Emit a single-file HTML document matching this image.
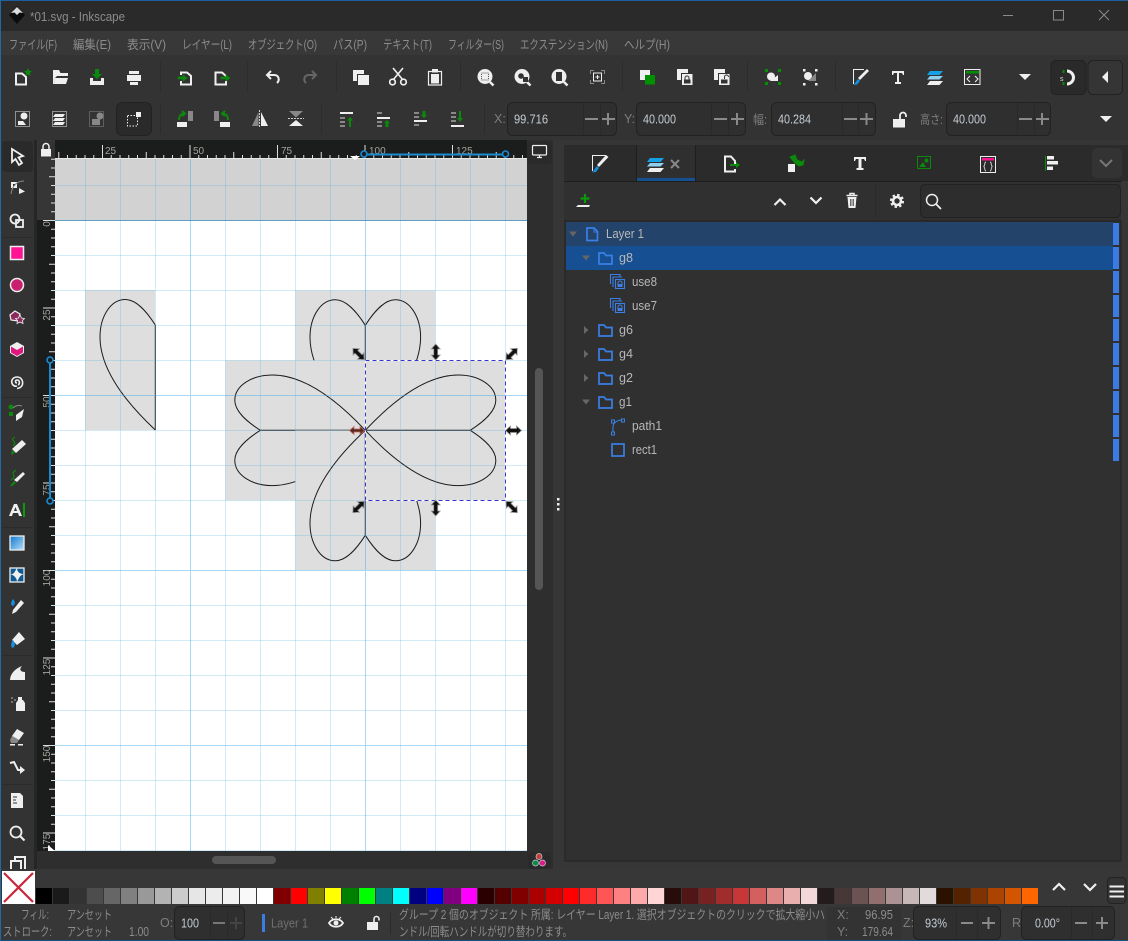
<!DOCTYPE html>
<html lang="ja"><head><meta charset="utf-8"><title>*01.svg - Inkscape</title>
<style>
html,body{margin:0;padding:0;background:#333;width:1128px;height:941px;overflow:hidden}
svg{display:block}
text{font-family:"Liberation Sans","Noto Sans CJK JP",sans-serif;font-size:12px}
.m{fill:#8c8c8c;font-size:12.500px}
.l{fill:#7e7e7e;font-size:12.500px}
.v{fill:#c4ccd4;font-size:12.500px}
.t{fill:#b8b8b8;font-size:13px}
.r{fill:#a3a39a;font-size:10px}
.s{fill:#8c8c8c;font-size:12.500px}
</style></head><body>
<svg xmlns="http://www.w3.org/2000/svg" width="1128" height="941" viewBox="0 0 1128 941">
<defs>
<linearGradient id="gr" x1="0" y1="0" x2="1" y2="1"><stop offset="0" stop-color="#0f78d0"/><stop offset="1" stop-color="#b8e0f8"/></linearGradient>
<path id="lobe" d="M0,-105C-9,-119 -19,-130.5 -30,-130.5C-45,-130.5 -55.3,-113 -55.3,-93C-55.3,-62 -32,-30 0,0" fill="none" stroke="#1c1c1c" stroke-width="1"/>
<pattern id="tx" patternUnits="userSpaceOnUse" x="14.5" y="140" width="87.5" height="19"><path d="M.5,5V19M9.25,15V19M18,15V19M26.75,15V19M35.5,15V19M44.25,12V19M53,15V19M61.75,15V19M70.5,15V19M79.25,15V19" stroke="#ddd" stroke-width="1" fill="none"/></pattern>
<pattern id="ty" patternUnits="userSpaceOnUse" x="37" y="220" width="18" height="87.5"><path d="M6,.5H18M14,9.25H18M14,18H18M14,26.75H18M14,35.5H18M12,44.25H18M14,53H18M14,61.75H18M14,70.5H18M14,79.25H18" stroke="#ddd" stroke-width="1" fill="none"/></pattern>
<path id="dbl" d="M-8,0L-3,-4.500V-2H3V-4.500L8,0L3,4.500V2H-3V4.500Z" fill="#111" stroke="#999" stroke-width=".8"/>
<path id="fold" d="M1,1H6L8,3.500H14V12H1Z" fill="none" stroke="#3a7fe6" stroke-width="1.700"/>
<path id="car" d="M-4,-2.500H4L0,2.500Z" fill="#666"/>
<path id="carr" d="M-2,-4V4L2.500,0Z" fill="#666"/>
<g id="usei" fill="none" stroke="#3a7fe6" stroke-width="1.100"><path d="M0.500,10V0.500H10V3"/><path d="M3,13V3H12"/><rect x="5.500" y="5.500" width="9" height="9" fill="#303030"/><path d="M8,10.500V9a2,2 0 0 1 4,0V10.500"/><rect x="7.500" y="10" width="5" height="3" fill="#3a7fe6" stroke="none"/></g>
</defs>

<!-- window chrome backgrounds -->
<rect width="1128" height="941" fill="#353535"/>
<rect y="1" width="1128" height="30" fill="#2a2a2a"/>
<rect y="31" width="1128" height="24" fill="#383838"/>
<rect y="55" width="1128" height="85" fill="#333"/>
<rect width="1128" height="1" fill="#1d5f9e"/>
<rect width="1" height="941" fill="#1d6ba8"/>

<!-- title -->
<path d="M17,6L25,15L17,24L9,15Z" fill="#0c0c0c"/><path d="M17,7L23,13L19.500,12.500L17,15L14.500,12.500L11,13Z" fill="#ddd"/>
<text x="30" y="21" fill="#8c8c8c" textLength="95" lengthAdjust="spacingAndGlyphs" style="font-size:13px">*01.svg - Inkscape</text>
<path d="M1003,15.500H1013" stroke="#8a8a8a"/><rect x="1053.500" y="10.500" width="10" height="9.500" fill="none" stroke="#8a8a8a"/><path d="M1099,10L1109,20M1109,10L1099,20" stroke="#8a8a8a" fill="none"/>

<!-- menu -->
<text class="m" x="9" y="49" textLength="48" lengthAdjust="spacingAndGlyphs">ファイル(F)</text>
<text class="m" x="73" y="49" textLength="38" lengthAdjust="spacingAndGlyphs">編集(E)</text>
<text class="m" x="127" y="49" textLength="39" lengthAdjust="spacingAndGlyphs">表示(V)</text>
<text class="m" x="182" y="49" textLength="50" lengthAdjust="spacingAndGlyphs">レイヤー(L)</text>
<text class="m" x="248" y="49" textLength="69" lengthAdjust="spacingAndGlyphs">オブジェクト(O)</text>
<text class="m" x="333" y="49" textLength="34" lengthAdjust="spacingAndGlyphs">パス(P)</text>
<text class="m" x="383" y="49" textLength="49" lengthAdjust="spacingAndGlyphs">テキスト(T)</text>
<text class="m" x="448" y="49" textLength="56" lengthAdjust="spacingAndGlyphs">フィルター(S)</text>
<text class="m" x="520" y="49" textLength="88" lengthAdjust="spacingAndGlyphs">エクステンション(N)</text>
<text class="m" x="624" y="49" textLength="46" lengthAdjust="spacingAndGlyphs">ヘルプ(H)</text>

<!-- toolbar separators -->
<path d="M160.500,62V92M247.500,62V92M336.500,62V92M460.500,62V92M622.500,62V92M747.500,62V92M835.500,62V92M160.500,104V134M321.500,104V134M484.500,104V134" stroke="#2c2c2c"/>

<!-- row 1 icons -->
<g fill="#efefef">
<path d="M16,73.500H22L26,77V84.500H16Z" fill="none" stroke="#efefef" stroke-width="2"/>
<path d="M28,68L29.200,70.800L32,71L29.900,73L30.500,76L28,74.400L25.500,76L26.100,73L24,71L26.800,70.800Z" fill="#0a8a0a"/>
<path d="M53,70H59L60.500,73H68V76H57L55,78L54,84H53Z"/><path d="M55,78H68L66,84H54Z"/>
<path d="M95,69H99V74H102L97,79L92,74H95Z" fill="#0a8a0a"/><path d="M90,78H93V81H101V78H104V85H90Z"/>
<path d="M129,71H139V74H129ZM127,75H141V81H127ZM130,82H138V85H130Z"/>
<path d="M181,75V72.500H187L191,76V84.500H181V81" fill="none" stroke="#efefef" stroke-width="2"/>
<path d="M178,77H183V75L187,78L183,81V79H178Z" fill="#0a8a0a" stroke="#0a8a0a" stroke-width=".6"/>
<path d="M226,76L222,72.500H215.500V84.500H226V81" fill="none" stroke="#efefef" stroke-width="2"/>
<path d="M221,77H226V75L230,78L226,81V79H221Z" fill="#0a8a0a" stroke="#0a8a0a" stroke-width=".6"/>
<path d="M277,83C280,80 279,75 274,75H268M271,71L267,75L271,79" fill="none" stroke="#efefef" stroke-width="2"/>
<path d="M306,83C303,80 304,75 309,75H315M312,71L316,75L312,79" fill="none" stroke="#666" stroke-width="2"/>
<path d="M353,70H364V74H357V81H353Z"/><rect x="358" y="75" width="11" height="10"/>
<path d="M393,80L403,68M403,80L393,68" stroke="#efefef" stroke-width="1.600" fill="none"/><circle cx="392.500" cy="82" r="2.800" fill="none" stroke="#efefef" stroke-width="1.700"/><circle cx="403.500" cy="82" r="2.800" fill="none" stroke="#efefef" stroke-width="1.700"/>
<rect x="428.500" y="71.500" width="13" height="13.500" fill="none" stroke="#efefef" stroke-width="1.200"/><rect x="431" y="74" width="8" height="9.500"/><rect x="432" y="69" width="6" height="3.500"/>
<circle cx="485" cy="76.500" r="7.500"/><path d="M490,82L493.500,85.500" stroke="#efefef" stroke-width="2.500"/><rect x="481.500" y="73" width="7" height="7" fill="none" stroke="#555" stroke-dasharray="1 1"/>
<circle cx="522" cy="76.500" r="7.500"/><path d="M527,82L530.500,85.500" stroke="#efefef" stroke-width="2.500"/><circle cx="521" cy="76" r="2.800" fill="#333"/><rect x="523" y="77" width="5" height="5" fill="#333"/>
<circle cx="559" cy="76.500" r="7.500"/><path d="M564,82L567.500,85.500" stroke="#efefef" stroke-width="2.500"/><rect x="556" y="72" width="6" height="9" fill="#333"/>
<path d="M590.500,74V70.500H594M601,70.500H604.500V74M604.500,80V83.500H601M594,83.500H590.500V80" fill="none" stroke="#888"/><rect x="593.500" y="73" width="8" height="8" fill="none" stroke="#efefef"/><path d="M595.500,77H599.500M597.500,75V79" stroke="#efefef"/>
<rect x="640" y="70" width="10" height="10"/><rect x="645" y="75" width="10" height="9.500" fill="#009000"/>
<path d="M677,69H688V73H681V80H677Z"/><rect x="682" y="74" width="10.500" height="11"/><path d="M685,80V78a2,2 0 0 1 4,0V80" fill="none" stroke="#333"/><rect x="684" y="79.500" width="6.500" height="4" fill="#333"/>
<path d="M714,69H725V73H718V80H714Z"/><rect x="719" y="74" width="10.500" height="11"/><path d="M724.500,79V77a2,2 0 0 1 4,0" fill="none" stroke="#333"/><rect x="721" y="79.500" width="6.500" height="4" fill="#333"/>
<g fill="#009000"><rect x="765" y="69" width="3" height="3"/><rect x="778" y="69" width="3" height="3"/><rect x="765" y="82" width="3" height="3"/><rect x="778" y="82" width="3" height="3"/></g>
<circle cx="771" cy="76.500" r="4"/><path d="M778,75V81H770Z"/>
<rect x="803" y="69" width="2.500" height="2.500"/><rect x="815" y="69" width="2.500" height="2.500"/><rect x="803" y="83" width="2.500" height="2.500"/><rect x="815" y="83" width="2.500" height="2.500"/>
<circle cx="808" cy="76" r="4"/><path d="M816,73V81H808Z" fill="#888"/>
<path d="M864,69.500H853.500V84" fill="none" stroke="#efefef"/><path d="M867,69L869,71L860,80L858,78Z"/><path d="M858,79L860,81L857,84.500L853,85C855,84 856,81 858,79Z" fill="#1490dd"/>
<path d="M892,71H904V75H903L902,73H899V82H901V84H895V82H897V73H894L893,75H892Z"/>
<path d="M930,71H943L939.500,75H927Z" fill="#16a0e6"/><path d="M930,76H943L939.500,79.500H927Z" fill="#8fd0f0"/><path d="M930,81H943L939.500,85H927Z"/>
<rect x="964.500" y="69.500" width="15.500" height="15" fill="none" stroke="#efefef"/><rect x="966" y="71" width="13" height="2.500" fill="#009000"/><path d="M970,76L967,79L970,82M975,76L978,79L975,82" fill="none" stroke="#efefef"/>
<path d="M1019,74H1031L1025,80Z"/>
</g>
<rect x="1051" y="60.500" width="35" height="34" rx="5" fill="#2a2a2a" stroke="#222"/>
<path d="M1067,71A6.500,6.500 0 1 1 1067,84" fill="none" stroke="#efefef" stroke-width="3"/><rect x="1062.500" y="70" width="2" height="3" fill="#009000"/><rect x="1062.500" y="82" width="2" height="3" fill="#009000"/><text x="1060" y="81" style="font-size:7px" fill="#ddd">s</text>
<rect x="1088" y="60.500" width="34.500" height="34" rx="5" fill="#353535" stroke="#222"/><path d="M1108,71V83L1102,77Z" fill="#efefef"/>

<!-- row 2 icons -->
<g fill="#efefef">
<g fill="none" stroke="#efefef" stroke-dasharray="1 1" shape-rendering="crispEdges"><rect x="15.500" y="111.500" width="14" height="15"/><rect x="52.500" y="111.500" width="14" height="15"/><rect x="89.500" y="111.500" width="14" height="15" stroke="#888"/></g>
<circle cx="24" cy="116" r="3.500"/><path d="M18,125V121H23L26,125Z"/>
<path d="M55,114H65L63,117H53ZM55,118H65L63,121H53ZM55,122H65L63,125H53Z"/>
<circle cx="100" cy="116" r="3.500" fill="#888"/><path d="M92,125V119H100V125Z" fill="#888"/>
<rect x="116.500" y="102.500" width="35" height="33" rx="6" fill="#2a2a2a" stroke="#222"/>
<rect x="127.500" y="115.500" width="10" height="10.500" fill="none" stroke="#efefef" stroke-dasharray="1.500 1.500"/><rect x="136" y="112" width="5" height="5"/>
<rect x="188" y="111" width="5" height="10" fill="#888"/><rect x="177" y="122" width="10" height="5"/><path d="M179,120C179,116 181,113.500 185,113.500M182,111L185,113.500L182,116" fill="none" stroke="#0a8a0a" stroke-width="2"/>
<rect x="214" y="111" width="5" height="10" fill="#888"/><rect x="220" y="122" width="10" height="5"/><path d="M228,120C228,116 226,113.500 222,113.500M225,111L222,113.500L225,116" fill="none" stroke="#0a8a0a" stroke-width="2"/>
<path d="M258.500,112V126H252Z" fill="#888"/><path d="M261,112V126H268Z"/><path d="M259.500,110V128" stroke="#ccc" stroke-dasharray="2 1" fill="none"/>
<path d="M289,111H303L296,117.500Z" fill="#888"/><path d="M289,126H303L296,120Z"/><path d="M288,118.500H304" stroke="#ccc" stroke-dasharray="2 1" fill="none"/>
<rect x="340" y="112" width="13" height="2"/><g fill="#888"><rect x="340" y="117" width="5" height="2"/><rect x="340" y="121" width="5" height="2"/><rect x="340" y="125" width="5" height="2"/></g><path d="M350,117L353,120.500H351V127H349V120.500H347Z" fill="#0a8a0a"/>
<g fill="#888"><rect x="377" y="112" width="5" height="2"/><rect x="377" y="121" width="5" height="2"/><rect x="377" y="125" width="5" height="2"/></g><rect x="377" y="117" width="13" height="2"/><path d="M387,120L390,123H388.500V127H385.500V123H384Z" fill="#0a8a0a"/>
<g fill="#888"><rect x="414" y="112" width="5" height="2"/><rect x="414" y="116" width="5" height="2"/><rect x="414" y="124" width="5" height="2"/></g><rect x="414" y="120" width="13" height="2"/><path d="M422.500,111H425.500V115H427L424,118L421,115H422.500Z" fill="#0a8a0a"/>
<g fill="#888"><rect x="451" y="112" width="5" height="2"/><rect x="451" y="116" width="5" height="2"/><rect x="451" y="120" width="5" height="2"/></g><rect x="451" y="125" width="13" height="2"/><path d="M459,111H461V118H463L460,122L457,118H459Z" fill="#0a8a0a"/>
</g>

<!-- fields -->
<g fill="#2f2f2f" stroke="#222"><rect x="507.500" y="102.500" width="109" height="33" rx="5"/><rect x="636.500" y="102.500" width="109" height="33" rx="5"/><rect x="771.500" y="102.500" width="104" height="33" rx="5"/><rect x="946.500" y="102.500" width="104" height="33" rx="5"/></g>
<path d="M583.500,103V135M600.500,103V135M711.500,103V135M728.500,103V135M842.500,103V135M858.500,103V135M1017.500,103V135M1034.500,103V135" stroke="#2a2a2a"/>
<g stroke="#8a8a8a" stroke-width="2" fill="none"><path d="M585,119H598M602,119H615M608,113V125M714,119H727M731,119H744M737,113V125M844,119H857M860,119H873M866.500,113V125M1019,119H1032M1036,119H1049M1042,113V125"/></g>
<text class="l" x="494" y="123">X:</text><text class="l" x="624" y="123">Y:</text><text class="l" x="753" y="124" textLength="14" lengthAdjust="spacingAndGlyphs">幅:</text><text class="l" x="920" y="124" textLength="23" lengthAdjust="spacingAndGlyphs">高さ:</text>
<text class="v" x="514" y="123.500" textLength="34" lengthAdjust="spacingAndGlyphs">99.716</text><text class="v" x="643" y="123.500" textLength="33" lengthAdjust="spacingAndGlyphs">40.000</text><text class="v" x="778" y="123.500" textLength="33" lengthAdjust="spacingAndGlyphs">40.284</text><text class="v" x="953" y="123.500" textLength="33" lengthAdjust="spacingAndGlyphs">40.000</text>
<rect x="893" y="119" width="12" height="8.500" fill="#efefef"/><path d="M900,119V115.500a3,3 0 0 1 6,0V117" fill="none" stroke="#efefef" stroke-width="1.800"/>
<path d="M1100,116H1112L1106,122Z" fill="#efefef"/>

<!-- left toolbar -->
<rect x="1" y="140" width="33" height="731" fill="#333"/>
<rect x="34" y="140" width="3" height="731" fill="#262626"/>
<rect x="2" y="141" width="31" height="31" rx="4" fill="#2a2a2a"/>
<path d="M2,237.500H33M2,397.500H33M2,527.500H33M2,655.500H33M2,784.500H33" stroke="#2b2b2b"/>
<g fill="#efefef">
<path d="M12,149L23,156L18.500,157.500L22,163L19,165L15.500,159L12,162Z" fill="none" stroke="#efefef" stroke-width="1.800"/>
<rect x="11" y="182" width="6" height="6" fill="#efefef"/><rect x="13" y="184" width="2" height="2" fill="#222"/><path d="M11,194C12,187 16,181 24,181" fill="none" stroke="#888"/><path d="M19,188L25,191.500L19,194Z"/>
<circle cx="15" cy="219" r="4.500" fill="none" stroke="#efefef" stroke-width="1.800"/><rect x="16" y="220" width="7" height="7" fill="none" stroke="#efefef" stroke-width="1.800"/>
<rect x="10.500" y="246.500" width="13" height="13" fill="#ff1493" stroke="#efefef" stroke-width="1.500"/>
<circle cx="17" cy="285" r="6.500" fill="#c8206e" stroke="#efefef" stroke-width="1.500"/>
<path d="M10,315L15,311L20,314L18,321L11,320Z" fill="#8c2a5e" stroke="#efefef" stroke-width="1.200"/><path d="M20,315L21.500,318L24.500,318.500L22.500,320.500L23,323.500L20,322L17,323.500L17.500,320.500L15.500,318.500L18.500,318Z" fill="#8c2a5e" stroke="#efefef" stroke-width=".8"/>
<path d="M17,342L24,346V353L17,357L10,353V346Z" fill="#efefef"/><path d="M17,350L23,346.500V352.500L17,356ZM17,350L11,346.500V352.500L17,356Z" fill="#e0187e"/>
<path d="M17,386C13,387 11,383 12,380C14,376 20,376 22,380C24,385 21,388 17,388.500M17,383C15,383 15,380 17,380C20,380 20,384 18,385" fill="none" stroke="#efefef" stroke-width="1.600"/>
<rect x="9" y="412" width="4" height="4" fill="#0a8a0a"/><circle cx="11" cy="407" r="2.500" fill="#0a8a0a"/><path d="M13,408C16,405 19,405 22,406" fill="none" stroke="#888"/><path d="M24,409L22,417L16,421L16,415Z"/>
<path d="M22,440L26,444L16,453L12,449Z"/><path d="M12,450L15,453L11,455Z" fill="#0a8a0a"/><path d="M15,437C8,440 19,442 13,446" fill="none" stroke="#0a8a0a" stroke-width="1.200"/>
<path d="M23,472L25,474L17,482L14,480Z"/><path d="M14,481L16,483L12,486L10,486Z" fill="#0a8a0a"/><path d="M16,470C9,474 18,476 11,480" fill="none" stroke="#0a8a0a" stroke-width="1.200"/>
<path d="M9,516L14,504H17L22,516H19L18,513H13L12,516ZM14,511H17L15.500,507Z"/><rect x="23" y="503" width="2" height="14" fill="#0a9a0a"/>
<rect x="10" y="536" width="14" height="14" fill="url(#gr)" stroke="#efefef" stroke-width="1.300"/>
<rect x="10" y="568" width="14" height="14" fill="#0f5a94" stroke="#efefef" stroke-width="1.300"/><path d="M10,574C15,575 15,570 17,568C17,573 21,574 24,574C20,575 19,578 17,582C17,578 14,575 10,574Z" fill="#efefef"/>
<path d="M21,600L24,603L16,612L12,614L13,610Z"/><path d="M13,599C15,602 16,603 13,606C10,605 11,602 13,599Z" fill="#1a8fe0"/>
<path d="M19,632L25,639L17,645L12,640Z"/><path d="M13,640C15,643 16,645 13,648C10,647 11,643 13,640Z" fill="#1a8fe0"/>
<path d="M10,680C10,675 14,669 22,666C19,669 20,672 25,672V680Z"/>
<path d="M18,700H23L25,703V711H16V703Z"/><rect x="18" y="697" width="4" height="3"/><g fill="#888"><circle cx="12" cy="698" r="1"/><circle cx="15" cy="700" r="1"/><circle cx="12" cy="702" r="1"/></g>
<path d="M17,729L24,733L19,740L12,736Z"/><path d="M12,736L19,740L17,743H11L10,740Z" fill="#888"/><rect x="10" y="744" width="5" height="1.500"/><rect x="18" y="744" width="5" height="1.500"/>
<path d="M10,763L14,762L18,770H22" fill="none" stroke="#efefef" stroke-width="2"/><path d="M20,766L25,770L20,774Z"/>
<path d="M11,793H20L23,796V808H11Z"/><path d="M13,797H17M13,800H16M13,803H17" stroke="#333"/>
<circle cx="16" cy="832" r="5.500" fill="none" stroke="#efefef" stroke-width="1.800"/><path d="M20,836L24.500,840.500" stroke="#efefef" stroke-width="2"/>
<path d="M11,871V861H21V871M15,861V857H25V870" fill="none" stroke="#efefef" stroke-width="2"/>
</g>

<!-- canvas -->
<rect x="37" y="140" width="18" height="80" fill="#363636"/>
<rect x="37" y="220" width="18" height="631" fill="#1b1d1d"/>
<rect x="55" y="140" width="472" height="18" fill="#1b1d1d"/>
<rect x="55" y="158" width="472" height="62" fill="#d2d2d2"/>
<rect x="55" y="220" width="472" height="631" fill="#fff"/>
<rect x="38" y="141" width="17" height="17" rx="3" fill="#333"/>
<rect x="41" y="149" width="10" height="7.500" fill="#efefef"/><path d="M43,149V146.500a3,3 0 0 1 6,0V149" fill="none" stroke="#efefef" stroke-width="1.500"/>

<!-- drawing -->
<rect x="85" y="290" width="70" height="140" fill="#dedede"/>
<g transform="translate(155.300,430)"><use href="#lobe"/><path d="M0,-105V0" stroke="#1c1c1c"/></g>
<g transform="translate(365.300,430.300)">
<rect x="-70" y="-140" width="140" height="140" fill="#dedede"/><use href="#lobe"/><use href="#lobe" transform="scale(-1,1)"/><path d="M0,-105V0" stroke="#1c1c1c"/>
<rect x="-140" y="-70" width="140" height="140" fill="#dedede"/><use href="#lobe" transform="matrix(0,1,1,0,0,0)"/><use href="#lobe" transform="rotate(-90)"/><path d="M-105,0H0" stroke="#1c1c1c"/>
<rect x="-70" y="-.3" width="140" height="140" fill="#dedede"/><use href="#lobe" transform="scale(1,-1)"/><use href="#lobe" transform="rotate(180)"/><path d="M0,105V0" stroke="#1c1c1c"/>
<rect x="-.3" y="-70" width="140" height="140" fill="#dedede"/><use href="#lobe" transform="rotate(90)"/><use href="#lobe" transform="matrix(0,-1,-1,0,0,0)"/><path d="M105,0H0" stroke="#1c1c1c"/>
<path d="M-70,0H0" stroke="#777"/>
</g>

<!-- grid -->
<g shape-rendering="crispEdges" stroke="#3faae6" stroke-opacity=".24" fill="none">
<path d="M85.500,158V851M120.500,158V851M155.500,158V851M225.500,158V851M260.500,158V851M295.500,158V851M330.500,158V851M400.500,158V851M435.500,158V851M470.500,158V851M505.500,158V851"/>
<path d="M55,185.500H527M55,255.500H527M55,290.500H527M55,325.500H527M55,360.500H527M55,430.500H527M55,465.500H527M55,500.500H527M55,535.500H527M55,605.500H527M55,640.500H527M55,675.500H527M55,710.500H527M55,780.500H527M55,815.500H527M55,850.500H527"/>
<path stroke-opacity=".46" d="M190.500,158V851M365.500,158V851M55,395.500H527M55,570.500H527M55,745.500H527"/>
<path stroke="#2a7fb0" stroke-opacity=".75" d="M55,220.500H527"/>
</g>

<!-- selection -->
<rect x="365.500" y="360.500" width="140" height="140" fill="none" stroke="#fff"/>
<rect x="365.500" y="360.500" width="140" height="140" fill="none" stroke="#3636d0" stroke-dasharray="4 3"/>
<use href="#dbl" transform="translate(358.500,354) rotate(45)"/>
<use href="#dbl" transform="translate(435.700,352) rotate(90)"/>
<use href="#dbl" transform="translate(511.700,354) rotate(-45)"/>
<use href="#dbl" transform="translate(513.500,430.500)"/>
<use href="#dbl" transform="translate(511.700,507) rotate(45)"/>
<use href="#dbl" transform="translate(435.700,508) rotate(90)"/>
<use href="#dbl" transform="translate(358.500,507) rotate(-45)"/>
<path d="M349.500,430.500L354,426.500V429H360V426.500L364.500,430.500L360,434.500V432H354V434.500Z" fill="#5a2a20" stroke="#c07060" stroke-width=".8"/>

<!-- rulers -->
<rect x="55" y="140" width="472" height="19" fill="url(#tx)"/>
<rect x="37" y="158" width="18" height="693" fill="url(#ty)"/>
<path d="M55,158.500H527" stroke="#e8e8e8"/>
<text class="r" x="105" y="154">25</text><text class="r" x="193" y="154">50</text><text class="r" x="281" y="154">75</text><text class="r" x="369" y="154">100</text><text class="r" x="456" y="154">125</text>
<g text-anchor="middle">
<text class="r" transform="translate(50,224) rotate(-90)">0</text>
<text class="r" transform="translate(50,315) rotate(-90)">25</text>
<text class="r" transform="translate(50,402) rotate(-90)">50</text>
<text class="r" transform="translate(50,490) rotate(-90)">75</text>
<text class="r" transform="translate(50,578) rotate(-90)">100</text>
<text class="r" transform="translate(50,667) rotate(-90)">125</text>
<text class="r" transform="translate(50,754) rotate(-90)">150</text>
<text class="r" transform="translate(50,842) rotate(-90)">175</text>
</g>
<path d="M350,156H360L355,160Z" fill="#fff"/>
<path d="M363.500,154.500H506" stroke="#1a8ad0" stroke-width="2"/>
<circle cx="364" cy="154" r="3" fill="#1b1d1d" stroke="#1a8ad0" stroke-width="1.600"/><circle cx="505.500" cy="154" r="3" fill="#1b1d1d" stroke="#1a8ad0" stroke-width="1.600"/>
<path d="M50,360V501" stroke="#1a8ad0" stroke-width="2"/>
<circle cx="50" cy="360" r="3" fill="#1b1d1d" stroke="#1a8ad0" stroke-width="1.600"/><circle cx="50" cy="501" r="3" fill="#1b1d1d" stroke="#1a8ad0" stroke-width="1.600"/>
<path d="M48,845V851H55Z" fill="#fff"/>

<!-- scrollbars -->
<rect x="527" y="140" width="26" height="729" fill="#2e2e2e"/>
<rect x="37" y="851" width="516" height="18" fill="#2e2e2e"/>
<rect x="527" y="141" width="25" height="23" rx="5" fill="#2a2a2a"/>
<rect x="532.500" y="145.500" width="14" height="9.500" rx="1" fill="none" stroke="#efefef" stroke-width="1.200"/><path d="M537,157.500H542M539.500,155V157" stroke="#efefef" stroke-width="1.200"/>
<rect x="535" y="368" width="8" height="222" rx="4" fill="#555"/>
<rect x="212" y="856" width="64" height="8" rx="4" fill="#555"/>
<rect x="528" y="852" width="23" height="17" rx="4" fill="#2a2a2a"/>
<circle cx="539" cy="856.500" r="3" fill="#c04040" stroke="#ccc" stroke-width=".7"/><circle cx="535.500" cy="863" r="3" fill="#0a8a4a" stroke="#ccc" stroke-width=".7"/><circle cx="542.500" cy="863" r="3" fill="#e0188a" stroke="#ccc" stroke-width=".7"/>
<rect x="553" y="140" width="11" height="729" fill="#363636"/>
<rect x="557" y="498" width="2.500" height="2.500" fill="#efefef"/><rect x="557" y="503" width="2.500" height="2.500" fill="#efefef"/><rect x="557" y="508" width="2.500" height="2.500" fill="#efefef"/>

<!-- right panel -->
<rect x="564" y="140" width="564" height="729" fill="#363636"/>
<rect x="564" y="145" width="564" height="36" fill="#2b2b2b"/>
<rect x="637" y="145" width="58" height="36" fill="#2f2f2f"/>
<rect x="637" y="178" width="58" height="4" fill="#17508f"/>
<path d="M564,181.500H1122M636.500,145V181M695.500,145V181" stroke="#1e1e1e"/>
<rect x="1092" y="148" width="30" height="30" rx="5" fill="#333"/>
<path d="M1100,160L1106,166L1112,160" fill="none" stroke="#777" stroke-width="2"/>
<g fill="#efefef">
<path d="M606,155.500H592.500V171" fill="none" stroke="#efefef"/><path d="M606,155L608.500,157L599,167L597,165Z"/><path d="M597,166L599,168L596,172L592,172.500C594,171 595,168 597,166Z" fill="#1490dd"/>
<path d="M650,158H664L660.500,162H647Z" fill="#16a0e6"/><path d="M650,163H664L660.500,166.500H647Z" fill="#8fd0f0"/><path d="M650,168H664L660.500,172H647Z"/>
<path d="M671,160L679,168M679,160L671,168" stroke="#888" stroke-width="2"/>
<path d="M735,165V161L731,156.500H725V171.500H735V169" fill="none" stroke="#efefef" stroke-width="2"/><path d="M730,164H736V162L740,165L736,168V166H730Z" fill="#0a8a0a"/>
<rect x="788" y="164" width="7" height="8"/><path d="M790,157L795,155L797,160L802,162L804,160L803,165L799,166L795,163Z" fill="#0a8a0a" stroke="#0a8a0a"/>
<path d="M854,157H866V161H865L864,159H861.500V168H863.500V170H856.500V168H858.500V159H856L855,161H854Z"/>
<rect x="917.500" y="156.500" width="13" height="12" fill="none" stroke="#0a8a0a"/><path d="M919,167L923,162L926,167Z" fill="#0a8a0a"/><circle cx="926.500" cy="160.500" r="2" fill="#0a8a0a"/>
<rect x="980.500" y="156.500" width="15" height="16" fill="none" stroke="#efefef"/><rect x="982" y="158" width="12" height="2.500" fill="#ff1493"/><path d="M986,162C984,162 985.500,166 983.500,166.500C985.500,167 984,171 986,171M990,162C992,162 990.500,166 992.500,166.500C990.500,167 992,171 990,171" fill="none" stroke="#ddd" stroke-width=".9"/>
<rect x="1045" y="156" width="1" height="15" fill="#0a8a0a"/><rect x="1047" y="156" width="7" height="3.500"/><rect x="1047" y="161" width="11" height="3.500"/><rect x="1047" y="166.500" width="6" height="3.500"/>
</g>
<!-- panel toolbar -->
<rect x="564" y="182" width="557" height="39" fill="#303030"/>
<path d="M875.500,184V218" stroke="#2b2b2b"/>
<rect x="920.500" y="184.500" width="200" height="33" rx="5" fill="#2d2d2d" stroke="#222"/>
<path d="M585,194V203M580.500,198.500H589.500" stroke="#0a9a0a" stroke-width="2.200"/><path d="M578,205H590L589,207H576Z" fill="#efefef"/>
<path d="M774.500,205L780,199.500L785.500,205" fill="none" stroke="#efefef" stroke-width="2.200"/>
<path d="M810.500,197.500L816,203L821.500,197.500" fill="none" stroke="#efefef" stroke-width="2.200"/>
<path d="M846.500,195.500H857.500M850,195V193.500H854V195" fill="none" stroke="#efefef" stroke-width="1.500"/><path d="M847.500,197H856.500L855.500,208H848.500Z" fill="#efefef"/><path d="M850.500,199V206M852,199V206M853.500,199V206" stroke="#333" stroke-width=".7"/>
<circle cx="897" cy="201" r="4" fill="none" stroke="#efefef" stroke-width="2.600"/><circle cx="897" cy="201" r="6" fill="none" stroke="#efefef" stroke-width="2.200" stroke-dasharray="2.400 2.310"/>
<circle cx="932" cy="200" r="5.500" fill="none" stroke="#efefef" stroke-width="1.500"/><path d="M936,204L941,209" stroke="#efefef" stroke-width="1.800"/>

<!-- tree -->
<rect x="565" y="221" width="556" height="640" fill="#303030" stroke="#222"/>
<rect x="566" y="222" width="547" height="24" fill="#24436a"/>
<rect x="566" y="246" width="547" height="24" fill="#175092"/>
<g fill="#3a7be4">
<rect x="1113" y="223" width="6" height="22"/><rect x="1113" y="247" width="6" height="22"/><rect x="1113" y="271" width="6" height="22"/><rect x="1113" y="295" width="6" height="22"/><rect x="1113" y="319" width="6" height="22"/><rect x="1113" y="343" width="6" height="22"/><rect x="1113" y="367" width="6" height="22"/><rect x="1113" y="391" width="6" height="22"/><rect x="1113" y="415" width="6" height="22"/><rect x="1113" y="439" width="6" height="22"/>
</g>
<use href="#car" x="573" y="234"/><use href="#car" x="586" y="258"/><use href="#carr" x="586" y="330"/><use href="#carr" x="586" y="354"/><use href="#carr" x="586" y="378"/><use href="#car" x="586" y="402"/>
<path d="M587,228H594L597.500,231.500V240.500H587Z" fill="none" stroke="#3a7fe6" stroke-width="1.700"/><path d="M594,228V232H597.500" fill="none" stroke="#3a7fe6"/>
<use href="#fold" x="598" y="252"/><use href="#fold" x="598" y="324"/><use href="#fold" x="598" y="348"/><use href="#fold" x="598" y="372"/><use href="#fold" x="598" y="396"/>
<use href="#usei" x="610" y="274"/><use href="#usei" x="610" y="298"/>
<path d="M613,432V427C613,423 617,420 622,420" fill="none" stroke="#3a7fe6" stroke-width="1.100"/><rect x="611.500" y="432" width="3" height="3" fill="none" stroke="#3a7fe6"/><rect x="611.500" y="420" width="3" height="3" fill="none" stroke="#3a7fe6"/><rect x="621.500" y="419" width="3" height="3" fill="none" stroke="#3a7fe6"/>
<rect x="612" y="444" width="12" height="12" fill="none" stroke="#3a7fe6" stroke-width="1.700"/>
<text class="t" x="606" y="238" textLength="38" lengthAdjust="spacingAndGlyphs">Layer 1</text>
<text class="t" x="619" y="262" textLength="14" lengthAdjust="spacingAndGlyphs">g8</text>
<text class="t" x="632" y="286" textLength="25" lengthAdjust="spacingAndGlyphs">use8</text>
<text class="t" x="632" y="310" textLength="25" lengthAdjust="spacingAndGlyphs">use7</text>
<text class="t" x="619" y="334" textLength="14" lengthAdjust="spacingAndGlyphs">g6</text>
<text class="t" x="619" y="358" textLength="14" lengthAdjust="spacingAndGlyphs">g4</text>
<text class="t" x="619" y="382" textLength="14" lengthAdjust="spacingAndGlyphs">g2</text>
<text class="t" x="619" y="406" textLength="13" lengthAdjust="spacingAndGlyphs">g1</text>
<text class="t" x="632" y="430" textLength="30" lengthAdjust="spacingAndGlyphs">path1</text>
<text class="t" x="632" y="454" textLength="25" lengthAdjust="spacingAndGlyphs">rect1</text>

<!-- bottom: palette -->
<rect x="35" y="869" width="1093" height="72" fill="#373737"/>
<rect x="1" y="869" width="34" height="3" fill="#373737"/>
<rect x="1" y="904" width="1127" height="37" fill="#373737"/>
<rect x="2" y="871" width="33" height="33" fill="#fff"/>
<path d="M4,873L33,902M33,873L4,902" stroke="#c8283c" stroke-width="2.200"/>
<g>
<rect x="36" y="888" width="16" height="16" fill="#000"/><rect x="53" y="888" width="16" height="16" fill="#1a1a1a"/><rect x="70" y="888" width="16" height="16" fill="#333"/><rect x="87" y="888" width="16" height="16" fill="#4d4d4d"/><rect x="104" y="888" width="16" height="16" fill="#666"/><rect x="121" y="888" width="16" height="16" fill="#808080"/><rect x="138" y="888" width="16" height="16" fill="#999"/><rect x="155" y="888" width="16" height="16" fill="#b3b3b3"/><rect x="172" y="888" width="16" height="16" fill="#ccc"/><rect x="189" y="888" width="16" height="16" fill="#e6e6e6"/><rect x="206" y="888" width="16" height="16" fill="#ececec"/><rect x="223" y="888" width="16" height="16" fill="#f2f2f2"/><rect x="240" y="888" width="16" height="16" fill="#f9f9f9"/><rect x="257" y="888" width="16" height="16" fill="#fff"/>
<rect x="274" y="888" width="16" height="16" fill="#800000"/><rect x="291" y="888" width="16" height="16" fill="#f00"/><rect x="308" y="888" width="16" height="16" fill="#808000"/><rect x="325" y="888" width="16" height="16" fill="#ff0"/><rect x="342" y="888" width="16" height="16" fill="#008000"/><rect x="359" y="888" width="16" height="16" fill="#0f0"/><rect x="376" y="888" width="16" height="16" fill="#008080"/><rect x="393" y="888" width="16" height="16" fill="#0ff"/><rect x="410" y="888" width="16" height="16" fill="#000080"/><rect x="427" y="888" width="16" height="16" fill="#00f"/><rect x="444" y="888" width="16" height="16" fill="#800080"/><rect x="461" y="888" width="16" height="16" fill="#f0f"/>
<rect x="478" y="888" width="16" height="16" fill="#2b0000"/><rect x="495" y="888" width="16" height="16" fill="#500"/><rect x="512" y="888" width="16" height="16" fill="#800000"/><rect x="529" y="888" width="16" height="16" fill="#a00"/><rect x="546" y="888" width="16" height="16" fill="#d40000"/><rect x="563" y="888" width="16" height="16" fill="#f00"/><rect x="580" y="888" width="16" height="16" fill="#ff2a2a"/><rect x="597" y="888" width="16" height="16" fill="#f55"/><rect x="614" y="888" width="16" height="16" fill="#ff8080"/><rect x="631" y="888" width="16" height="16" fill="#faa"/><rect x="648" y="888" width="16" height="16" fill="#ffd5d5"/>
<rect x="665" y="888" width="16" height="16" fill="#280b0b"/><rect x="682" y="888" width="16" height="16" fill="#501616"/><rect x="699" y="888" width="16" height="16" fill="#782121"/><rect x="716" y="888" width="16" height="16" fill="#a02c2c"/><rect x="733" y="888" width="16" height="16" fill="#c83737"/><rect x="750" y="888" width="16" height="16" fill="#d35f5f"/><rect x="767" y="888" width="16" height="16" fill="#de8787"/><rect x="784" y="888" width="16" height="16" fill="#e9afaf"/><rect x="801" y="888" width="16" height="16" fill="#f4d7d7"/>
<rect x="818" y="888" width="16" height="16" fill="#241c1c"/><rect x="835" y="888" width="16" height="16" fill="#483737"/><rect x="852" y="888" width="16" height="16" fill="#6c5353"/><rect x="869" y="888" width="16" height="16" fill="#916f6f"/><rect x="886" y="888" width="16" height="16" fill="#ac9393"/><rect x="903" y="888" width="16" height="16" fill="#c8b7b7"/><rect x="920" y="888" width="16" height="16" fill="#e3dbdb"/>
<rect x="937" y="888" width="16" height="16" fill="#2b1100"/><rect x="954" y="888" width="16" height="16" fill="#520"/><rect x="971" y="888" width="16" height="16" fill="#803300"/><rect x="988" y="888" width="16" height="16" fill="#a40"/><rect x="1005" y="888" width="16" height="16" fill="#d45500"/><rect x="1022" y="888" width="16" height="16" fill="#f60"/>
</g>
<path d="M1053,890L1059,884L1065,890M1084,884L1090,890L1096,884" fill="none" stroke="#efefef" stroke-width="2.200"/>
<rect x="1107.500" y="877.500" width="18.500" height="26" rx="4" fill="#333" stroke="#222"/>
<path d="M1109.500,886.500H1124M1109.500,891.500H1124M1109.500,896.500H1124" stroke="#efefef" stroke-width="2"/>

<!-- status -->
<text class="s" x="21" y="919" textLength="28" lengthAdjust="spacingAndGlyphs">フィル:</text>
<text class="s" x="3" y="936" textLength="49" lengthAdjust="spacingAndGlyphs">ストローク:</text>
<text class="s" x="67" y="919" textLength="45" lengthAdjust="spacingAndGlyphs">アンセット</text>
<text class="s" x="67" y="936" textLength="45" lengthAdjust="spacingAndGlyphs">アンセット</text>
<text class="s" x="129" y="936" textLength="20" lengthAdjust="spacingAndGlyphs">1.00</text>
<text class="l" x="160" y="927">O:</text>
<rect x="174.500" y="906.500" width="70" height="33" rx="5" fill="#2f2f2f" stroke="#222"/>
<path d="M210.500,907V939M227.500,907V939" stroke="#2a2a2a"/>
<path d="M213,923H225" stroke="#777" stroke-width="2"/><path d="M230,923H242M236,917V929" stroke="#444" stroke-width="2"/>
<text class="v" x="181" y="927.500" textLength="18" lengthAdjust="spacingAndGlyphs">100</text>
<rect x="262" y="914" width="3" height="18" fill="#3a7be4"/>
<text x="271" y="927.500" fill="#707070" textLength="37" lengthAdjust="spacingAndGlyphs" style="font-size:12.500px">Layer 1</text>
<path d="M329,923C332,918 340,918 343,923C340,928 332,928 329,923Z" fill="none" stroke="#efefef" stroke-width="1.800"/><circle cx="336" cy="923" r="2.500" fill="#efefef"/><path d="M331,917L333,919M336,916V918M341,917L339,919" stroke="#efefef"/>
<rect x="367" y="922" width="11" height="8" fill="#efefef"/><path d="M374,922V919a2.500,2.500 0 0 1 5,0V920.500" fill="none" stroke="#efefef" stroke-width="1.600"/>
<path d="M390.500,913V934" stroke="#2b2b2b"/>
<text class="s" x="399" y="919" textLength="426" lengthAdjust="spacingAndGlyphs">グループ 2 個のオブジェクト 所属: レイヤー Layer 1. 選択オブジェクトのクリックで拡大縮小ハ</text>
<text class="s" x="399" y="936" textLength="173" lengthAdjust="spacingAndGlyphs">ンドル/回転ハンドルが切り替わります。</text>
<rect x="827" y="907" width="74" height="34" fill="#333"/>
<text class="l" x="837" y="919">X:</text><text class="l" x="837" y="936">Y:</text>
<text class="s" x="865" y="919" textLength="28" lengthAdjust="spacingAndGlyphs">96.95</text>
<text class="s" x="862" y="936" textLength="31" lengthAdjust="spacingAndGlyphs">179.64</text>
<text class="l" x="903" y="927">Z:</text>
<rect x="913.500" y="906.500" width="87" height="33" rx="5" fill="#2f2f2f" stroke="#222"/>
<path d="M956.500,907V939M977.500,907V939" stroke="#2a2a2a"/>
<path d="M961,923H973M982,923H995M988.500,917V929" stroke="#8a8a8a" stroke-width="2"/>
<text class="v" x="925" y="927.500" textLength="22" lengthAdjust="spacingAndGlyphs">93%</text>
<text class="l" x="1012" y="927">R:</text>
<rect x="1021.500" y="906.500" width="93" height="33" rx="5" fill="#2f2f2f" stroke="#222"/>
<path d="M1071.500,907V939M1092.500,907V939" stroke="#2a2a2a"/>
<path d="M1075,923H1087M1096,923H1108M1102,917V929" stroke="#8a8a8a" stroke-width="2"/>
<text class="v" x="1035" y="927.500" textLength="25" lengthAdjust="spacingAndGlyphs">0.00°</text>
<rect y="940" width="1128" height="1" fill="#1b4f80"/>
</svg>
</body></html>
